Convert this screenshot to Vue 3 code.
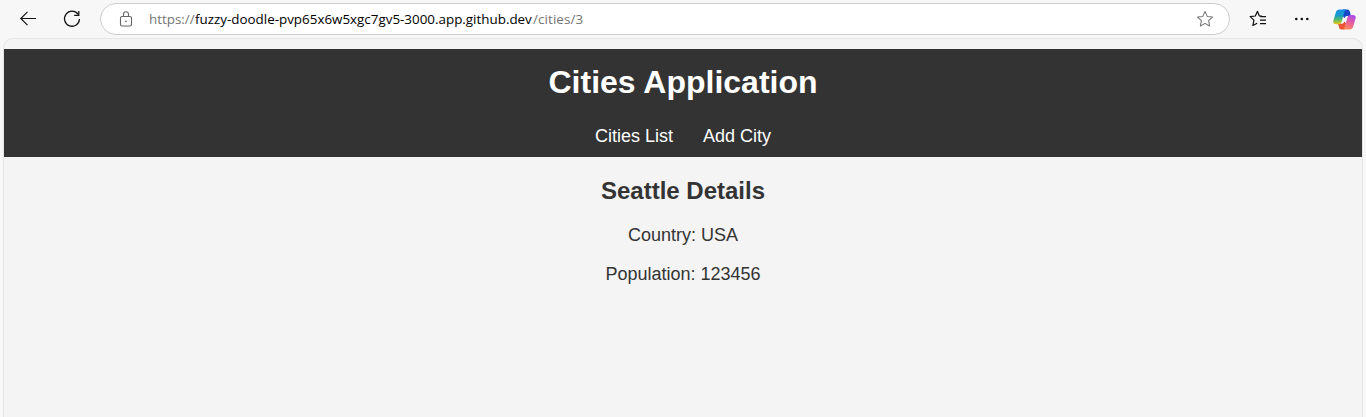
<script setup>
const url = { scheme: 'https://', host: 'fuzzy-doodle-pvp65x6w5xgc7gv5-3000.app.github.dev', path: '/cities/3' }
const links = ['Cities List', 'Add City']
const details = [
  { label: 'Country', value: 'USA' },
  { label: 'Population', value: '123456' },
]
</script>

<template>
  <div class="browser">
    <div class="toolbar">
      <svg class="back" width="18" height="16" viewBox="0 0 18 16">
        <path d="M17 7.5H1.800M8.500.9 1.800 7.500l6.700 6.600" fill="none" stroke="#111" stroke-width="1.15" />
      </svg>
      <svg class="reload" width="18" height="18" viewBox="0 0 18 18">
        <path d="M15 4.2A7.500 7.500 0 1 0 16.500 9M15.800 1v4.400h-4.600" fill="none" stroke="#111" stroke-width="1.25" />
      </svg>
      <div class="address">
        <svg class="lock" width="14" height="17" viewBox="0 0 14 17">
          <rect x="1.500" y="5.500" width="11" height="9.500" rx="1.600" fill="none" stroke="#666" stroke-width="1.100" />
          <path d="M4.500 5.500V3.200a2.500 2.500 0 0 1 5 0v2.300" fill="none" stroke="#666" stroke-width="1.100" />
          <circle cx="7" cy="10.300" r="0.900" fill="#666" />
        </svg>
        <div class="url">
          <span class="scheme">{{ url.scheme }}</span><span class="host">{{ url.host }}</span><span class="path">{{ url.path }}</span>
        </div>
        <svg class="star" width="18" height="18" viewBox="0 0 18 18">
          <path d="M9 1.500l2.250 4.900 5.250.65-3.900 3.650 1.050 5.300L9 13.400 4.350 16l1.050-5.300L1.500 7.050l5.250-.65z" fill="none" stroke="#777" stroke-width="1.050" stroke-linejoin="round" />
        </svg>
      </div>
      <svg class="favorites" width="18" height="18" viewBox="0 0 18 18">
        <path d="M13 6.200 10.400 5.900 8.400 1.400 6.300 6 1.200 6.600 4.900 10.100 3.900 15.500 8.100 13.200M11 6.500h6M11 10h6M11 13.500h6" fill="none" stroke="#111" stroke-width="1.250" stroke-linejoin="round" />
      </svg>
      <svg class="more" width="16" height="4" viewBox="0 0 16 4">
        <circle cx="2.300" cy="2" r="1.300" /><circle cx="7.800" cy="2" r="1.300" /><circle cx="13.300" cy="2" r="1.300" />
      </svg>
      <svg class="copilot" width="23" height="21" viewBox="0 0 23 21">
        <defs>
          <linearGradient id="cool" x1="0" y1="0" x2="0" y2="1">
            <stop offset="0" stop-color="#1b8fe8" /><stop offset=".4" stop-color="#159bc9" />
            <stop offset=".68" stop-color="#55b96b" /><stop offset="1" stop-color="#f0c419" />
          </linearGradient>
          <linearGradient id="warm" x1=".7" y1="0" x2=".3" y2="1">
            <stop offset="0" stop-color="#a64bea" /><stop offset=".5" stop-color="#ea5f9f" />
            <stop offset="1" stop-color="#ff8a55" />
          </linearGradient>
        </defs>
        <path d="M10 .5h4.200c1.600 0 2.200.8 2.600 2l1.200 4.500h-3.600c-1.500 0-2.400.6-2.900 2.200L9 6z" fill="#1748c6" />
        <path d="M5 14.800h4c1 0 1.800-.7 2.300-2.200l2.400 2.500-1 3.400c-.5 1.500-1.300 2-2.700 2H8.300c-1.400 0-1.900-.8-2.200-2z" fill="#e95532" />
        <path d="M7 .5h6.400c-1 .2-1.600 1-2 2.400L8.900 12c-.6 2-1.300 3.300-3.200 3.300H3.200C.6 15.300-.2 13.700.5 11.300L2.700 3.700C3.400 1.500 4.500.5 7 .5z" fill="url(#cool)" />
        <path d="M16 20.500H9.600c1-.2 1.600-1 2-2.400l2.700-9.100c.6-2 1.300-3.100 3.200-3.100h2.300c2.600 0 3.400 1.600 2.700 3.900l-2.200 7.500c-.7 2.200-1.800 3.200-4.300 3.200z" fill="url(#warm)" />
      </svg>
    </div>
    <div class="page">
      <header>
        <h1>Cities Application</h1>
        <nav><a v-for="link in links" :key="link">{{ link }}</a></nav>
      </header>
      <main>
        <h2>Seattle Details</h2>
        <p v-for="item in details" :key="item.label">{{ item.label }}: {{ item.value }}</p>
      </main>
    </div>
  </div>
</template>

<style>
body { overflow: hidden; }
</style>

<style scoped>
.browser {
  box-sizing: border-box;
  height: 417px;
  background: #f7f7f7;
  display: flex;
  flex-direction: column;
  overflow: hidden;
}
.toolbar {
  height: 38px;
  flex: none;
  display: flex;
  align-items: center;
  box-sizing: border-box;
  padding-left: 19px;
}
.toolbar svg { flex: none; }
.reload { margin-left: 26px; }
.address {
  box-sizing: border-box;
  width: 1130px;
  height: 32px;
  margin-left: 19px;
  border: 1px solid #cdcdcd;
  border-radius: 16px;
  background: #fff;
  display: flex;
  align-items: center;
  padding: 0 15px 0 18px;
}
.url {
  flex: 1;
  margin-left: 16px;
  display: flex;
  font: 13.4px/18px "Open Sans", "Noto Sans", sans-serif;
  white-space: nowrap;
  color: #757575;
}
.scheme { width: 46px; }
.host { width: 338px; color: #000; }
.path { letter-spacing: 0.1px; }
.favorites { margin-left: 19px; }
.more { margin-left: 27px; fill: #111; }
.copilot { margin-left: 23px; }
.page {
  flex: 1;
  margin: 0 3px;
  border: 1px solid #e6e6e6;
  border-bottom: 0;
  border-radius: 10px 10px 0 0;
  padding-top: 10px;
  background: #f4f4f4;
  color: #333;
  font-family: "Liberation Sans", Arial, sans-serif;
  text-align: center;
}
header {
  height: 108px;
  box-sizing: border-box;
  padding-top: 15px;
  background: #333;
  color: #fff;
}
h1 { margin: 0; font-size: 32px; line-height: 37px; }
nav {
  display: flex;
  justify-content: center;
  gap: 30px;
  margin-top: 25px;
  font-size: 18px;
  line-height: 21px;
}
h2 { margin: 20px 0 0; font-size: 24px; line-height: 28px; }
p { margin: 18px 0 0; font-size: 18px; line-height: 21px; }
h2 + p { margin-top: 20px; }
</style>
